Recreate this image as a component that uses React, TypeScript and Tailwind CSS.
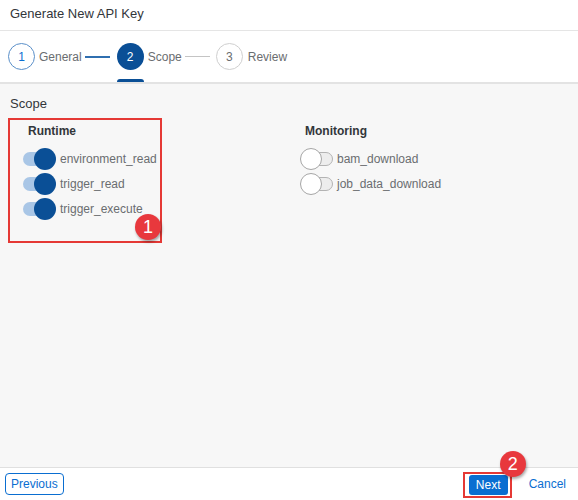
import React from 'react';

const font = { fontFamily: '"Liberation Sans", Arial, sans-serif' };

type ToggleProps = { on: boolean; label: string };

const Toggle = ({ on, label }: ToggleProps) => (
  <div className="flex h-[25px] items-center">
    <div className="relative h-[22px] w-[33px] flex-none">
      {on ? (
        <>
          <div className="absolute left-0 top-[4px] h-[14px] w-[28px] rounded-full bg-[#a9c6e6]" />
          <div className="absolute right-0 top-0 h-[22px] w-[22px] rounded-full bg-[#0a4f96]" />
        </>
      ) : (
        <>
          <div className="absolute right-0 top-[4px] h-[14px] w-[28px] rounded-full border border-[#b3b3b3] bg-[#ededed]" />
          <div className="absolute left-0 top-0 h-[22px] w-[22px] rounded-full border border-[#a6a6a6] bg-white" />
        </>
      )}
    </div>
    <span className="ml-[4px] text-[12px] text-[#6a6d70]">{label}</span>
  </div>
);

const Badge = ({ n, className }: { n: string; className: string }) => (
  <div
    className={`absolute flex h-[26px] w-[26px] items-center justify-center rounded-full bg-[#e8383d] text-[18px] text-white shadow-[1px_2px_3px_rgba(0,0,0,0.35)] ${className}`}
  >
    {n}
  </div>
);

export default function App() {
  return (
    <div style={font} className="flex h-[500px] w-[578px] flex-col bg-white text-[#32363a]">
      {/* title */}
      <div className="flex h-[31px] flex-none items-center border-b border-[#e5e5e5] px-[10px] pb-[2px] text-[13px]">
        Generate New API Key
      </div>

      {/* steps */}
      <div className="relative flex h-[53px] flex-none items-center border-b-2 border-[#e3e3e3] px-[8px] text-[12px] text-[#6a6d70]">
        <div className="flex h-[27px] w-[27px] items-center justify-center rounded-full border border-[#5a8fc9] text-[#0a6ed1]">1</div>
        <span className="ml-[4px]">General</span>
        <div className="ml-[3px] h-[2px] w-[25px] bg-[#2f6fb0]" />
        <div className="relative ml-[7px] flex h-[27px] w-[27px] items-center justify-center rounded-full bg-[#0a4f96] text-white">
          2
          <div className="absolute left-0 top-[36px] h-[3px] w-[27px] rounded-t-sm bg-[#0a4f96]" />
        </div>
        <span className="ml-[4px]">Scope</span>
        <div className="ml-[3px] h-[1px] w-[25px] bg-[#c4c4c4]" />
        <div className="ml-[6px] flex h-[27px] w-[27px] items-center justify-center rounded-full border border-[#cfcfcf]">3</div>
        <span className="ml-[5px]">Review</span>
      </div>

      {/* content */}
      <div className="flex-1 bg-[#f7f7f7] px-[8px] pt-[11px]">
        <div className="ml-[2px] text-[13px] leading-[18px] text-[#32363a]">Scope</div>
        <div className="mt-[5px] flex items-start">
          <div className="relative w-[154px] flex-none border-2 border-[#e53935] pb-[20px] pl-[13px] pt-[2px]">
            <div className="ml-[5px] text-[12px] font-bold leading-[18px]">Runtime</div>
            <div className="mt-[6px]">
              <Toggle on label="environment_read" />
              <Toggle on label="trigger_read" />
              <Toggle on label="trigger_execute" />
            </div>
            <Badge n="1" className="bottom-[1px] right-[-1px]" />
          </div>
          <div className="ml-[138px] pt-[4px]">
            <div className="ml-[5px] text-[12px] font-bold leading-[18px]">Monitoring</div>
            <div className="mt-[6px]">
              <Toggle on={false} label="bam_download" />
              <Toggle on={false} label="job_data_download" />
            </div>
          </div>
        </div>
      </div>

      {/* footer */}
      <div className="flex h-[33px] flex-none items-center border-t border-[#e0e0e0] px-[5px] text-[12px]">
        <button className="h-[22px] rounded-[4px] border border-[#0a6ed1] px-[5px] text-[#0a6ed1]">Previous</button>
        <div className="flex-1" />
        <div className="relative mt-[2px] border-2 border-[#e53935] pb-[1px] pl-[4px] pr-[2px] pt-[1px]">
          <button className="block h-[20px] w-[39px] rounded-[3px] bg-[#0a6ed1] text-white">Next</button>
          <Badge n="2" className="left-[35px] top-[-23px]" />
        </div>
        <span className="ml-[17px] mr-[7px] text-[#0a6ed1]">Cancel</span>
      </div>
    </div>
  );
}
